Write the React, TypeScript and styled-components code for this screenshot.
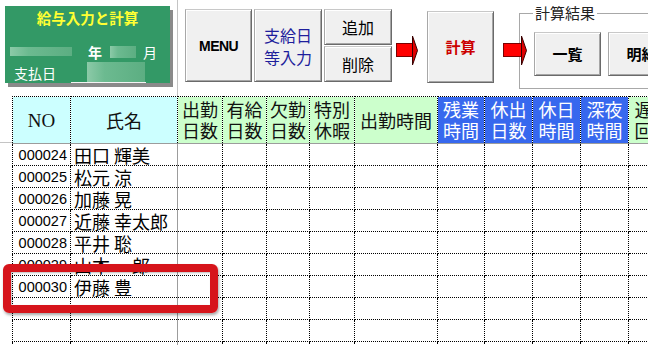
import React from "react";
import styled, { createGlobalStyle } from "styled-components";

const GlobalStyle = createGlobalStyle`
  html, body {
    margin: 0;
    padding: 0;
    background: #fff;
  }
  body {
    font-family: "Noto Sans CJK JP", "Liberation Sans", sans-serif;
    color: #000;
  }
`;

const Page = styled.div`
  position: relative;
  width: 648px;
  height: 345px;
  overflow: hidden;
  background: #fff;
`;

const Toolbar = styled.div`
  display: flex;
  height: 96px;
`;

const TitleArea = styled.div`
  width: 177px;
  height: 96px;
  flex-shrink: 0;
  border-right: 1px solid #c4c4c4;
`;

const GreenPanel = styled.div`
  margin: 6px 0 0 5px;
  width: 165px;
  height: 77px;
  background: #339966;
  box-shadow: 3px 4px 0 #8a8a8a;
  display: flex;
  flex-direction: column;
`;

const PanelTitle = styled.div`
  padding-top: 3px;
  height: 18px;
  line-height: 18px;
  text-align: center;
  font-size: 14.5px;
  font-weight: bold;
  color: #ffff33;
`;

const PanelRow = styled.div<{ $top: number; $h: number }>`
  display: flex;
  align-items: center;
  margin-top: ${(p) => p.$top}px;
  height: ${(p) => p.$h}px;
  padding-left: 5px;
  color: #fff;
  font-size: 14px;
`;

const Masked = styled.div<{ $w: number; $h: number; $ml?: number }>`
  width: ${(p) => p.$w}px;
  height: ${(p) => p.$h}px;
  margin-left: ${(p) => p.$ml || 0}px;
  background: linear-gradient(90deg, #8ccaa8 0%, #6cba90 30%, #5cae82 100%);
  flex-shrink: 0;
`;

const PanelText = styled.span<{ $ml: number; $bold?: boolean }>`
  margin-left: ${(p) => p.$ml}px;
  font-weight: ${(p) => (p.$bold ? "bold" : "normal")};
  line-height: 16px;
`;

const DateField = styled.div`
  margin-left: 15px;
  width: 75px;
  height: 20px;
  border-bottom: 1px solid #f4f4f4;
  display: flex;
`;

const ButtonArea = styled.div`
  display: flex;
  align-items: flex-start;
  padding-top: 9px;
  margin-left: 7px;
`;

const Button = styled.div<{ $w: number; $h: number; $color?: string; $bold?: boolean; $size?: number }>`
  box-sizing: border-box;
  width: ${(p) => p.$w}px;
  height: ${(p) => p.$h}px;
  flex-shrink: 0;
  display: flex;
  align-items: center;
  justify-content: center;
  text-align: center;
  background: #f0f0f0;
  border: 1px solid;
  border-color: #c8c8c8 #6a6a6a #6a6a6a #a8a8a8;
  box-shadow: inset 1px 1px 0 #ffffff, inset -1px -1px 0 #a6a6a6;
  color: ${(p) => p.$color || "#000"};
  font-weight: ${(p) => (p.$bold ? "bold" : "normal")};
  font-size: ${(p) => p.$size || 16}px;
  line-height: 22px;
`;

const MenuLabel = styled.span`
  font-family: "Liberation Sans", Arial, sans-serif;
  font-size: 14px;
  font-weight: bold;
  letter-spacing: -0.6px;
`;

const ButtonStack = styled.div`
  display: flex;
  flex-direction: column;
  gap: 1px;
  margin-left: 2px;
`;

const ArrowBox = styled.div<{ $ml: number; $mr?: number; $w: number }>`
  position: relative;
  z-index: 1;
  margin: 26px ${(p) => p.$mr || 0}px 0 ${(p) => p.$ml}px;
  width: ${(p) => p.$w}px;
  height: 31px;
  flex-shrink: 0;
`;

const GroupBox = styled.div`
  position: relative;
  box-sizing: border-box;
  margin-top: 4px;
  width: 200px;
  height: 76px;
  border: 1px solid #a8a8a8;
  padding: 18px 0 0 14px;
  display: flex;
  gap: 7px;
`;

const GroupLabel = styled.span`
  position: absolute;
  top: -11px;
  left: 13px;
  padding: 0 2px;
  background: #fff;
  font-size: 15px;
  line-height: 20px;
  color: #222;
`;

const Sheet = styled.div`
  display: flex;
  align-items: flex-start;
`;

const Gutter = styled.div`
  width: 12px;
  height: 46px;
  flex-shrink: 0;
  border-bottom: 1px solid #c4c4c4;
`;

const Grid = styled.table`
  border-collapse: collapse;
  table-layout: fixed;
  width: 664px;
  flex-shrink: 0;
`;

const tones: Record<string, { bg: string; fg: string }> = {
  cyan: { bg: "#ccffff", fg: "#111" },
  green: { bg: "#ccffcc", fg: "#111" },
  blue: { bg: "#3768ee", fg: "#fff" },
};

const HeadCell = styled.th<{ $tone: string; $serif?: boolean }>`
  height: 46px;
  padding: 0;
  border: 1px dotted #000;
  border-bottom: 1px solid #9c9c9c;
  background: ${(p) => tones[p.$tone].bg};
  color: ${(p) => tones[p.$tone].fg};
  font-family: ${(p) => (p.$serif ? `"Liberation Serif", serif` : `"Noto Sans CJK JP", sans-serif`)};
  font-size: ${(p) => (p.$serif ? 19 : 18)}px;
  font-weight: normal;
  line-height: 21px;
  text-align: center;
  white-space: nowrap;
  overflow: hidden;
`;

const Cell = styled.td<{ $kind?: "id" | "name" }>`
  height: 21px;
  padding: 0 ${(p) => (p.$kind === "id" ? "3px" : "0")} 0 ${(p) => (p.$kind === "name" ? "3px" : "0")};
  border: 1px dotted #000;
  ${(p) => (p.$kind === "name" ? "border-right: 1px solid #9c9c9c;" : "")}
  font-family: ${(p) =>
    p.$kind === "id" ? `"Liberation Sans", Arial, sans-serif` : `"Noto Sans CJK JP", sans-serif`};
  font-size: ${(p) => (p.$kind === "id" ? 14.5 : 18)}px;
  line-height: 20px;
  text-align: ${(p) => (p.$kind === "id" ? "right" : "left")};
  white-space: nowrap;
  overflow: hidden;
`;

const Callout = styled.div`
  position: absolute;
  left: 3px;
  top: 264px;
  box-sizing: border-box;
  width: 215px;
  height: 49px;
  border: 8px solid #d6141b;
  border-radius: 6px;
  box-shadow: 1px 2px 3px rgba(0, 0, 0, 0.35), inset 1px 1px 2px rgba(0, 0, 0, 0.25);
`;

const RedArrow = ({ body }: { body: number }) => (
  <svg width={body + 6} height={31} viewBox={`0 0 ${body + 6} 31`}>
    <rect x={0.5} y={8.5} width={body} height={13} fill="#ff0000" stroke="#7a0000" strokeWidth={1} />
    <polygon points={`${body + 0.5},1 ${body + 5.5},15.5 ${body + 0.5},30`} fill="#e00000" stroke="#3a0000" strokeWidth={1} />
  </svg>
);

const columns = [
  { w: 58, tone: "cyan", label: ["NO"], serif: true },
  { w: 107, tone: "cyan", label: ["氏名"] },
  { w: 45, tone: "green", label: ["出勤", "日数"] },
  { w: 44, tone: "green", label: ["有給", "日数"] },
  { w: 43, tone: "green", label: ["欠勤", "日数"] },
  { w: 45, tone: "green", label: ["特別", "休暇"] },
  { w: 83, tone: "green", label: ["出勤時間"] },
  { w: 47, tone: "blue", label: ["残業", "時間"] },
  { w: 48, tone: "blue", label: ["休出", "日数"] },
  { w: 48, tone: "blue", label: ["休日", "時間"] },
  { w: 48, tone: "blue", label: ["深夜", "時間"] },
  { w: 48, tone: "green", label: ["遅刻", "回数"] },
];

const staff = [
  ["000024", "田口 輝美"],
  ["000025", "松元 涼"],
  ["000026", "加藤 晃"],
  ["000027", "近藤 幸太郎"],
  ["000028", "平井 聡"],
  ["000029", "山本 一郎"],
  ["000030", "伊藤 豊"],
  ["", ""],
  ["", ""],
  ["", ""],
];

export default function App() {
  return (
    <Page>
      <GlobalStyle />
      <Toolbar>
        <TitleArea>
          <GreenPanel>
            <PanelTitle>給与入力と計算</PanelTitle>
            <PanelRow $top={16} $h={18}>
              <Masked $w={62} $h={9} />
              <PanelText $ml={16} $bold>年</PanelText>
              <Masked $w={26} $h={12} $ml={8} />
              <PanelText $ml={7}>月</PanelText>
            </PanelRow>
            <PanelRow $top={2} $h={21}>
              <PanelText $ml={4}>支払日</PanelText>
              <DateField>
                <Masked $w={58} $h={20} $ml={16} />
              </DateField>
            </PanelRow>
          </GreenPanel>
        </TitleArea>

        <ButtonArea>
          <Button $w={67} $h={73}>
            <MenuLabel>MENU</MenuLabel>
          </Button>
          <Button $w={68} $h={73} $color="#1e1e9c" style={{ marginLeft: 2 }}>
            支給日
            <br />
            等入力
          </Button>
          <ButtonStack>
            <Button $w={68} $h={36}>追加</Button>
            <Button $w={68} $h={36}>削除</Button>
          </ButtonStack>
          <ArrowBox $ml={4} $w={22}>
            <RedArrow body={16} />
          </ArrowBox>
          <Button $w={67} $h={72} $color="#cc0000" $bold $size={15} style={{ marginTop: 2, marginLeft: 9 }}>
            計算
          </Button>
          <ArrowBox $ml={9} $mr={-8} $w={24}>
            <RedArrow body={18} />
          </ArrowBox>
          <GroupBox>
            <GroupLabel>計算結果</GroupLabel>
            <Button $w={67} $h={44} $bold $size={15}>一覧</Button>
            <Button $w={67} $h={44} $bold $size={15}>明細</Button>
          </GroupBox>
        </ButtonArea>
      </Toolbar>

      <Sheet>
        <Gutter />
        <Grid>
          <colgroup>
            {columns.map((c, i) => (
              <col key={i} style={{ width: c.w }} />
            ))}
          </colgroup>
          <thead>
            <tr>
              {columns.map((c, i) => (
                <HeadCell key={i} $tone={c.tone} $serif={c.serif}>
                  {c.label.map((l, j) => (
                    <React.Fragment key={j}>
                      {j > 0 && <br />}
                      {l}
                    </React.Fragment>
                  ))}
                </HeadCell>
              ))}
            </tr>
          </thead>
          <tbody>
            {staff.map(([id, name], r) => (
              <tr key={r}>
                <Cell $kind="id">{id}</Cell>
                <Cell $kind="name">{name}</Cell>
                {columns.slice(2).map((_, i) => (
                  <Cell key={i} />
                ))}
              </tr>
            ))}
          </tbody>
        </Grid>
      </Sheet>

      <Callout />
    </Page>
  );
}
